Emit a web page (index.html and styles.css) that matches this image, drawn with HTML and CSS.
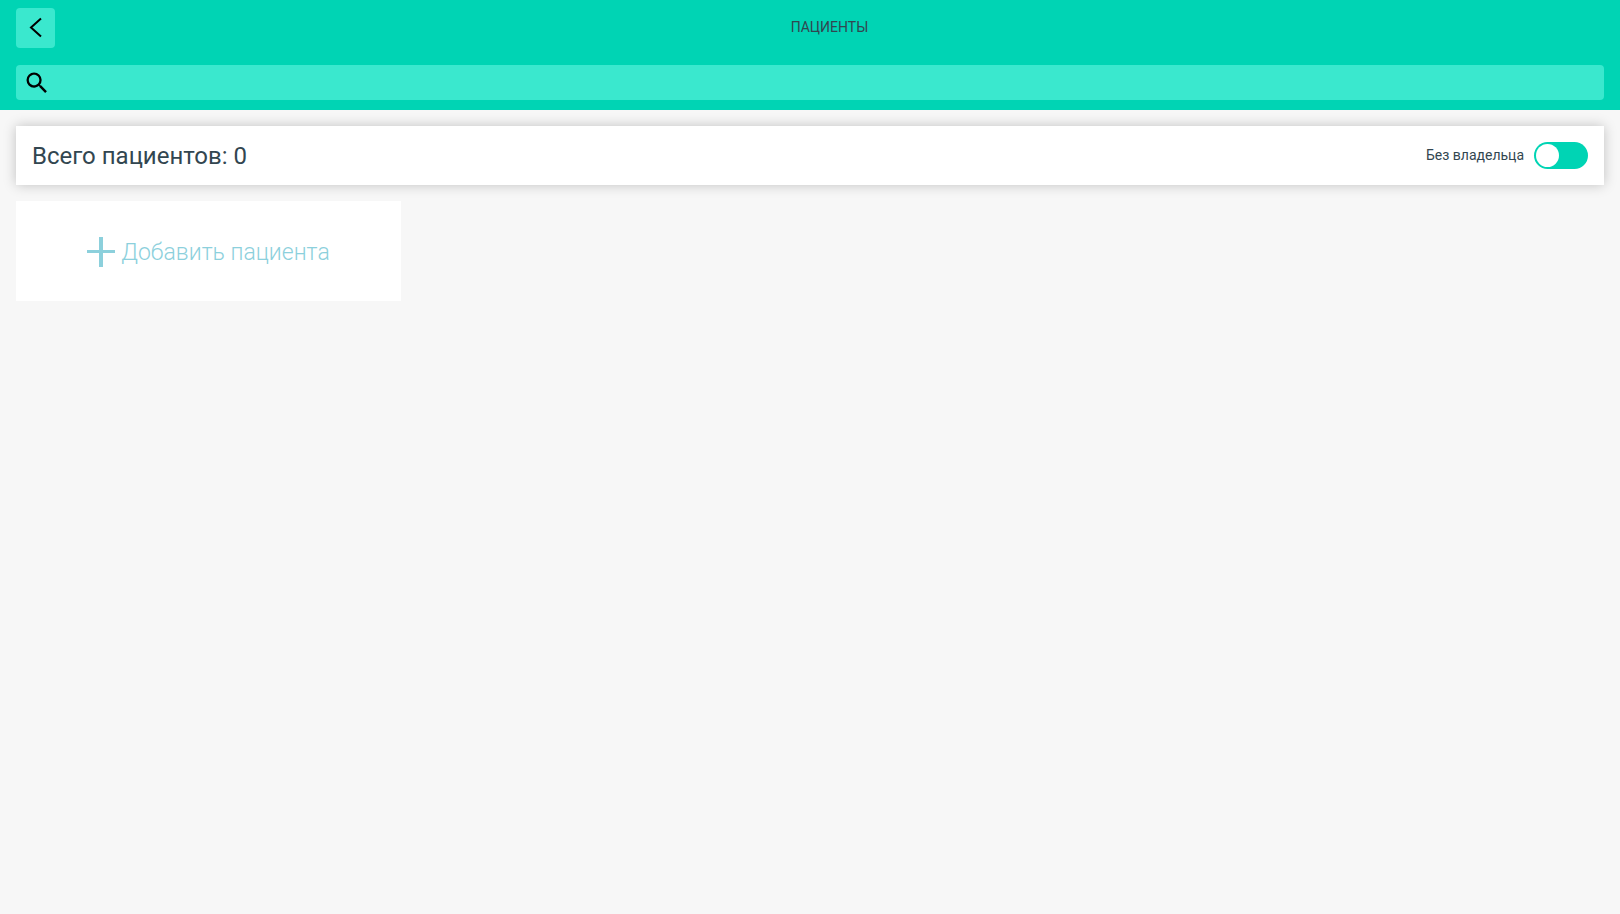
FILE: index.html
```html
<!DOCTYPE html>
<html lang="ru">
<head>
<meta charset="utf-8">
<meta name="viewport" content="width=device-width, initial-scale=1">
<title>Пациенты</title>
<link rel="stylesheet" href="styles.css">
</head>
<body>
<header class="header">
  <div class="header-bar">
    <button class="back" type="button" aria-label="Назад">
      <svg class="back-icon" viewBox="0 0 39 40" aria-hidden="true"><path d="M25 10.500L15 19.500L25 28.500" /></svg>
    </button>
    <h1 class="title">Пациенты</h1>
  </div>
  <label class="search">
    <svg class="search-icon" viewBox="0 0 24 24" aria-hidden="true"><path d="M15.500 14h-.79l-.28-.27A6.471 6.471 0 0 0 16 9.500 6.500 6.500 0 1 0 9.500 16c1.610 0 3.090-.59 4.230-1.570l.27.28v.79l5 4.990L20.490 19l-4.990-5zm-6 0C7.010 14 5 11.990 5 9.500S7.010 5 9.500 5 14 7.010 14 9.500 11.990 14 9.500 14z"/></svg>
    <input class="search-input" type="search" aria-label="Поиск">
  </label>
</header>
<main class="content">
  <section class="summary">
    <h2 class="total">Всего пациентов: 0</h2>
    <label class="filter">
      <span class="filter-label">Без владельца</span>
      <input class="switch" type="checkbox" role="switch">
    </label>
  </section>
  <div class="grid">
    <button class="add" type="button">
      <svg class="add-icon" viewBox="0 0 28 30" aria-hidden="true"><path d="M12 0h4v13h12v3H16v14h-4V16H0v-3h12z"/></svg>
      <span>Добавить пациента</span>
    </button>
  </div>
</main>
</body>
</html>
```

FILE: styles.css
```css
* { box-sizing: border-box; }
body {
  margin: 0;
  background: #f7f7f7;
  color: #324650;
  font-family: Roboto, sans-serif;
}
.header {
  padding: 8px 16px 10px;
  background: #00d4b4;
}
.header-bar {
  display: grid;
  grid-template-columns: 39px 1fr;
  align-items: center;
  margin-bottom: 17px;
}
.back {
  width: 39px;
  height: 40px;
  padding: 0;
  border: 0;
  border-radius: 4px;
  background: #3ae8ce;
}
.back-icon {
  display: block;
  width: 39px;
  height: 40px;
  fill: none;
  stroke: #000;
  stroke-width: 2;
}
.title {
  margin: 0;
  padding-bottom: 2px;
  font-size: 14px;
  font-weight: 400;
  line-height: 20px;
  text-align: center;
  text-transform: uppercase;
}
.search {
  display: flex;
  align-items: center;
  height: 35px;
  padding-left: 7px;
  border-radius: 4px;
  background: #3ae8ce;
}
.search-icon { width: 28px; height: 28px; }
.search-input {
  flex: 1;
  height: 35px;
  padding: 0 8px;
  border: 0;
  outline: 0;
  background: transparent;
  font: inherit;
}
.content { padding: 16px; }
.summary {
  display: flex;
  align-items: center;
  justify-content: space-between;
  height: 59px;
  padding: 0 16px;
  background: #fff;
  box-shadow: 0 0 12px rgba(0, 0, 0, 0.22);
}
.total {
  margin: 0;
  font-size: 24px;
  font-weight: 400;
  line-height: 28px;
}
.filter {
  display: flex;
  align-items: center;
  gap: 10px;
  font-size: 14px;
  line-height: 20px;
}
.filter-label { padding-bottom: 2px; }
.switch {
  appearance: none;
  display: flex;
  width: 54px;
  height: 27px;
  margin: 0;
  padding: 2px;
  border-radius: 14px;
  background: #00d4b4;
}
.switch::before {
  content: "";
  width: 23px;
  height: 23px;
  border-radius: 50%;
  background: #fff;
}
.switch:checked { justify-content: flex-end; }
.grid {
  display: grid;
  grid-template-columns: repeat(4, 1fr);
  gap: 16px;
  margin-top: 16px;
}
.add {
  display: flex;
  align-items: center;
  justify-content: center;
  gap: 6px;
  height: 100px;
  padding: 2px 0 0;
  border: 0;
  background: #fff;
  color: #8cd0dc;
  font-family: inherit;
  font-size: 23px;
  font-weight: 300;
}
.add-icon {
  width: 28px;
  height: 30px;
  fill: currentColor;
}
```
